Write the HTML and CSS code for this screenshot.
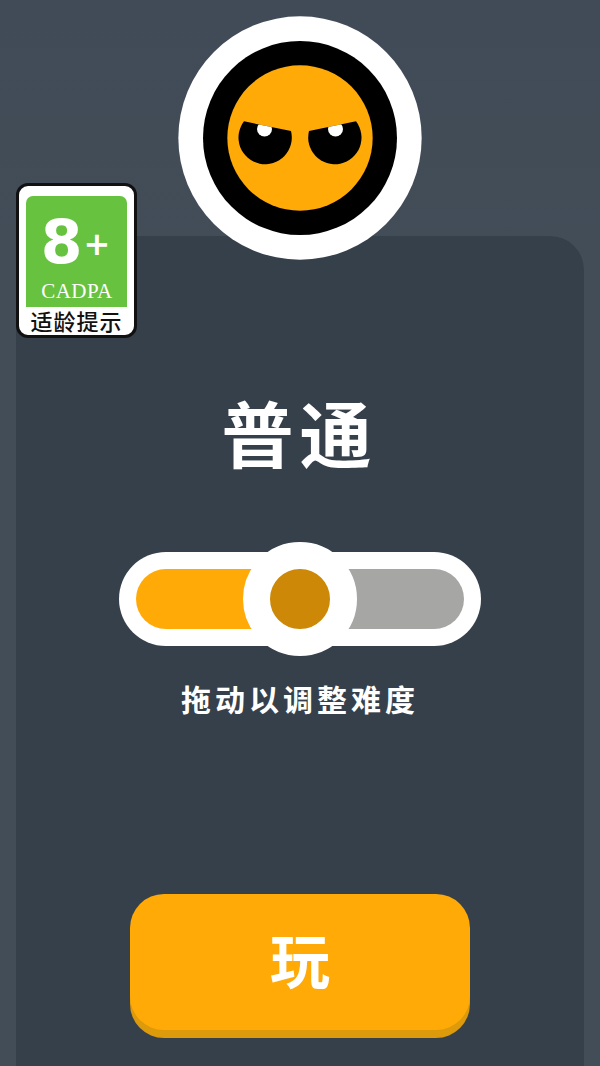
FILE: index.html
```html
<!DOCTYPE html>
<html lang="zh-CN">
  <head>
    <meta charset="UTF-8" />
    <meta name="viewport" content="width=device-width, initial-scale=1.0" />
    <title>普通</title>
    <link rel="stylesheet" href="styles.css">
  </head>
  <body>
    <div class="logo">
      <svg class="logo-img" viewBox="24 17 732 732" xmlns="http://www.w3.org/2000/svg">
        <defs>
          <clipPath id="eyeLeft"><path d="M222 333 L363 362 A80 80 0 1 1 222 333 Z" /></clipPath>
          <clipPath id="eyeRight"><path d="M558 333 L417 362 A80 80 0 1 0 558 333 Z" /></clipPath>
        </defs>
        <circle cx="390" cy="383" r="365" fill="#fff" />
        <circle cx="390" cy="383" r="291" fill="#000" />
        <circle cx="390" cy="383" r="218" fill="#ffaa07" />
        <path d="M222 333 L363 362 A80 80 0 1 1 222 333 Z" fill="#000" />
        <path d="M558 333 L417 362 A80 80 0 1 0 558 333 Z" fill="#000" />
        <circle cx="283.5" cy="356" r="22.5" fill="#fff" clip-path="url(#eyeLeft)" />
        <circle cx="496.5" cy="356" r="22.5" fill="#fff" clip-path="url(#eyeRight)" />
      </svg>
    </div>

    <div class="age-badge">
      <div class="age-green">
        <div class="age-num">8<span class="age-plus">+</span></div>
        <div class="age-org">CADPA</div>
      </div>
      <div class="age-label">适龄提示</div>
    </div>

    <div class="panel">
      <div class="title">普通</div>
      <div class="slider">
        <div class="track">
          <div class="track-on"></div>
          <div class="track-off"></div>
        </div>
        <div class="knob"></div>
      </div>
      <div class="hint">拖动以调整难度</div>
      <button class="play-btn">玩</button>
    </div>
  </body>
</html>
```

FILE: styles.css
```css
body {
  margin: 0;
  height: 1066px;
  overflow: hidden;
  display: flex;
  flex-direction: column;
  background: linear-gradient(#404b57, #424d58 250px);
  font-family: "Noto Sans CJK SC", "Noto Sans", sans-serif;
}
.logo {
  display: flex;
  justify-content: center;
  padding-top: 16px;
  position: relative;
  z-index: 2;
  height: 220px;
}
.logo-img {
  width: 244px;
  height: 244px;
}
/* Age rating badge */
.age-badge {
  position: absolute;
  left: 16px;
  top: 183px;
  width: 121px;
  height: 155px;
  box-sizing: border-box;
  padding: 10px 7px 0 7px;
  background: #fff;
  border: 3px solid #111;
  border-radius: 12px;
  z-index: 3;
}
.age-green {
  height: 111px;
  background: #67c23f;
  border-radius: 7px 7px 0 0;
  color: #fff;
  display: flex;
  flex-direction: column;
  align-items: center;
}
.age-num {
  box-sizing: border-box;
  height: 83px;
  padding: 10px 2px 0 0;
  font-family: "DejaVu Sans", sans-serif;
  font-weight: 700;
  font-size: 60px;
  line-height: 73px;
  display: flex;
  align-items: center;
}
.age-plus {
  font-size: 32px;
  line-height: 32px;
  margin-left: 1px;
  margin-top: 2px;
}
.age-org {
  font-family: "Liberation Serif", serif;
  font-size: 21px;
  line-height: 24px;
  letter-spacing: 0.4px;
  padding-left: 1px;
}
.age-label {
  color: #111;
  font-size: 22px;
  font-weight: 500;
  line-height: 26px;
  text-align: center;
  white-space: nowrap;
  letter-spacing: 1px;
}
.panel {
  flex: 1;
  position: relative;
  z-index: 1;
  margin: 0 16px;
  background: #36404b;
  border-radius: 34px 34px 0 0;
  display: flex;
  flex-direction: column;
  align-items: center;
}
.title {
  margin-top: 140px;
  height: 110px;
  line-height: 110px;
  font-size: 72px;
  font-weight: 700;
  letter-spacing: 6px;
  padding-right: 1px;
  color: #fff;
}
.slider {
  position: relative;
  margin-top: 66px;
  width: 362px;
  height: 94px;
  box-sizing: border-box;
  padding: 17px;
  background: #fff;
  border-radius: 47px;
}
.track {
  display: flex;
  height: 60px;
  border-radius: 30px;
  overflow: hidden;
}
.track-on {
  flex: 1;
  background: #ffaa07;
}
.track-off {
  flex: 1;
  background: #a6a6a5;
}
.knob {
  position: absolute;
  left: 123.5px;
  top: -10.5px;
  width: 60px;
  height: 60px;
  border: 27.5px solid #fff;
  border-radius: 50%;
  background: #cc8806;
}
.hint {
  margin-top: 30px;
  font-size: 30px;
  line-height: 44px;
  font-weight: 700;
  letter-spacing: 4px;
  color: #fff;
}
.play-btn {
  margin-top: auto;
  margin-bottom: 36px;
  width: 340px;
  height: 136px;
  padding: 0 0 10px;
  border: none;
  border-radius: 34px;
  background: #ffaa07;
  box-shadow: 0 8px 0 #dd9a0a;
  color: #fff;
  font-family: inherit;
  font-size: 60px;
  font-weight: 700;
}
```
